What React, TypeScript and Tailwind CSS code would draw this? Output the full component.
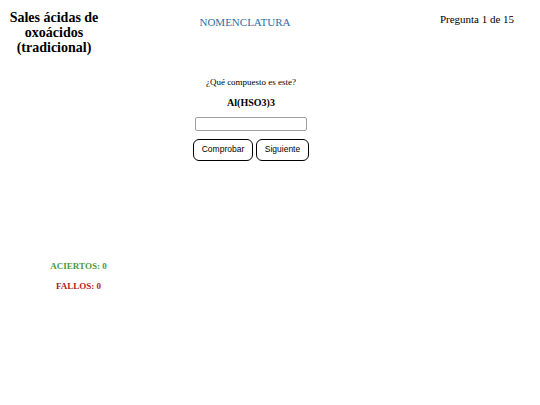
import React from "react";

export default function App() {
  return (
    <div className="w-[540px] h-[405px] bg-white text-black font-['Liberation_Serif',serif] relative">
      <header className="flex items-start pt-[10px]">
        <h1 className="w-[108px] text-center font-bold text-[14px] leading-[15px]">
          Sales ácidas de oxoácidos (tradicional)
        </h1>
        <div className="flex-1 text-center text-[11px] text-[#2e6fa8] pt-[4px] pr-[48px]">NOMENCLATURA</div>
        <div className="w-[110px] text-center text-[11px] pt-[1px] pr-[16px]">Pregunta 1 de 15</div>
      </header>
      <main className="flex flex-col items-center pr-[38px] mt-[21px]">
        <p className="text-[9px]">¿Qué compuesto es este?</p>
        <p className="text-[10px] font-bold mt-[5px]">Al(HSO3)3</p>
        <input className="mt-[7px] w-[112px] h-[14px] border border-[#a0a0a0] rounded-[2px]" />
        <div className="flex gap-[3px] mt-[8px] font-['Liberation_Sans',sans-serif] text-[8.5px]">
          <button className="w-[60px] h-[22px] border border-black rounded-[6px] bg-white">Comprobar</button>
          <button className="w-[53px] h-[22px] border border-black rounded-[6px] bg-white">Siguiente</button>
        </div>
      </main>
      <section className="w-[157px] flex flex-col items-center font-bold text-[9px] mt-[99px]">
        <p className="text-[#4a9a3a]">ACIERTOS: 0</p>
        <p className="text-[#b22222] mt-[7px]">FALLOS: 0</p>
      </section>
    </div>
  );
}
